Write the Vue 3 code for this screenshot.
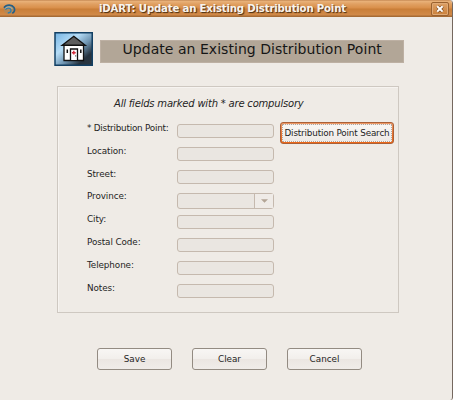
<script setup>
const fields = [
  { label: '* Distribution Point:', tight: true },
  { label: 'Location:' },
  { label: 'Street:' },
  { label: 'Province:', combo: true },
  { label: 'City:' },
  { label: 'Postal Code:' },
  { label: 'Telephone:' },
  { label: 'Notes:' },
]
const actions = ['Save', 'Clear', 'Cancel']
</script>

<template>
  <div class="window">
    <header class="titlebar">
      <svg class="app-icon" width="13" height="11" viewBox="0 0 13 11">
        <ellipse cx="6.3" cy="5.5" rx="5.6" ry="4.6" fill="#a98a62" opacity=".7" />
        <path d="M1 3.8C3.4.2 9 .4 10.9 3.4c1.4 2.2.6 4.8-1.6 5.9" fill="none" stroke="#235f88" stroke-width="1.7" />
        <path d="M2.4 5.6c2-2.3 5.6-1.6 5.6.7 0 1.6-1.5 2.6-3.2 2.7" fill="none" stroke="#2f7fae" stroke-width="1.3" />
        <path d="M2.2 4.3c2.2-2 6-1.9 7 .6" fill="none" stroke="#a9c5cc" stroke-width=".7" />
      </svg>
      <span class="title">iDART: Update an Existing Distribution Point</span>
      <button class="close" aria-label="Close">
        <svg width="8" height="8" viewBox="0 0 8 8">
          <path d="M1.4 1.4l5.2 5.2M6.6 1.4L1.4 6.6" stroke="#7d4b20" stroke-width="3.4" />
          <path d="M1.2 1.2l5.4 5.4M6.6 1.2L1.2 6.6" stroke="#fff" stroke-width="2" />
        </svg>
      </button>
    </header>

    <section class="banner">
      <svg class="house" width="39" height="34" viewBox="0 0 39 34">
        <defs>
          <linearGradient id="sky" x1="0" y1="0" x2="1" y2="1">
            <stop offset="0" stop-color="#74b4e4" />
            <stop offset=".35" stop-color="#b5dcf6" />
            <stop offset=".58" stop-color="#6f95b2" />
            <stop offset=".8" stop-color="#26323e" />
            <stop offset="1" stop-color="#2b3641" />
          </linearGradient>
        </defs>
        <rect x="1" y=".75" width="37.25" height="32.5" fill="url(#sky)" stroke="#123f63" stroke-width="1.5" />
        <path d="M10 13h19.5v15.5H10z" fill="#fff" stroke="#111" stroke-width="1.3" />
        <path d="M8.2 13.3L19.8 4.3l11.4 9z" fill="#5d5d5d" stroke="#111" stroke-width="1.4" />
        <path d="M16.5 28V17h7v11" fill="#fff" stroke="#111" stroke-width="1.3" />
        <path d="M13.3 17.5v3.5M26.8 17.5v3.5" stroke="#111" stroke-width="1.5" />
        <path d="M19.8 18.8v3.8M17.9 20.7h3.8" stroke="#d42a3a" stroke-width="1.4" />
        <path d="M21.7 23.2v1.4" stroke="#555" stroke-width="1" />
      </svg>
      <h1><span>Update an Existing Distribution Point</span></h1>
    </section>

    <main class="panel">
      <p class="note">All fields marked with * are compulsory</p>
      <div class="form">
        <div class="rows">
          <div v-for="field in fields" :key="field.label" class="row">
            <label :class="{ tight: field.tight }">{{ field.label }}</label>
            <div v-if="field.combo" class="field combo">
              <span class="arrow"><svg width="7" height="4" viewBox="0 0 7 4"><path d="M0 .3h7L3.5 3.8z" fill="#b3a596" /></svg></span>
            </div>
            <div v-else class="field"></div>
          </div>
        </div>
        <button class="search"><span>Distribution Point Search</span></button>
      </div>
    </main>

    <footer class="actions">
      <button v-for="action in actions" :key="action"><span>{{ action }}</span></button>
    </footer>
  </div>
</template>

<style>
body {
  margin: 0;
  background: #efebe7;
}
</style>

<style scoped>
* {
  box-sizing: border-box;
}
.window {
  width: 453px;
  height: 400px;
  overflow: hidden;
  background: #efebe6;
  border-right: 1px solid #75685f;
  border-radius: 0 4px 3px 0;
  font-family: "DejaVu Sans", sans-serif;
  color: #242424;
  white-space: nowrap;
}
button {
  font-family: inherit;
  color: inherit;
  padding: 0;
  margin: 0;
}
.titlebar {
  display: flex;
  align-items: center;
  height: 17px;
  padding: 0 3px;
  background: linear-gradient(#b87a45 0, #eab37b 1px, #e0a062 4px, #d98f4a 8px, #c97e38 9px, #d18a49 15px, #a66b35 16px);
}
.app-icon {
  margin-top: 1px;
}
.title {
  flex: 1;
  padding-left: 83px;
  font-size: 10.2px;
  letter-spacing: -0.2px;
  line-height: 15px;
  font-weight: bold;
  color: #f8f4ee;
  text-shadow: 1px 1px 1px #452c12;
}
.close {
  display: flex;
  align-items: center;
  justify-content: center;
  width: 18px;
  height: 14px;
  border: 1px solid #9b622f;
  border-radius: 2px;
  background: linear-gradient(#dda066, #cb813c);
  box-shadow: inset 0 0 0 1px #e0aa76;
}
.banner {
  display: flex;
  padding: 15px 0 0 54px;
  height: 69px;
}
.house {
  flex: none;
}
h1 {
  width: 304px;
  height: 23px;
  margin: 8px 0 0 7px;
  padding-left: 21.5px;
  background: #b2a697;
  border: 1px solid #bdb0a3;
  font-size: 14px;
  letter-spacing: 0.04px;
  line-height: 16px;
  font-weight: normal;
  color: #161616;
}
.panel {
  width: 342px;
  height: 227px;
  margin-left: 57px;
  border: 1px solid #cec8c1;
  box-shadow: inset 1px 1px #f6f3f0;
}
.note {
  margin: 9px 0 0 56px;
  font-size: 10px;
  letter-spacing: -0.2px;
  line-height: 16px;
  font-style: italic;
}
.form {
  display: flex;
  align-items: flex-start;
  padding: 10px 0 0 29px;
}
.rows {
  width: 187px;
}
.row {
  display: flex;
  height: 22.8px;
}
label {
  width: 90px;
  font-size: 8.8px;
  letter-spacing: -0.08px;
  line-height: 12px;
}
.tight {
  letter-spacing: -0.22px;
}
.field {
  width: 97px;
  height: 14px;
  margin-top: 2px;
  background: #eae6e1;
  border: 1px solid #c5b9ae;
  border-radius: 3px;
}
.combo {
  display: flex;
  justify-content: flex-end;
  height: 16px;
  margin-top: 3px;
}
.arrow {
  display: flex;
  align-items: center;
  justify-content: center;
  width: 19px;
  border-left: 1px solid #c5b9ae;
  background: #efebe7;
}
.search {
  width: 114px;
  height: 22px;
  margin-left: 6px;
  border: 1px solid #aa6038;
  border-radius: 3px;
  background: linear-gradient(#ee9a68, #e9722d 60%, #ed6818);
  padding: 1px;
  font-size: 8.8px;
  letter-spacing: -0.16px;
}
.search span {
  display: flex;
  align-items: center;
  justify-content: center;
  height: 18px;
  background: linear-gradient(#f8f6f4, #eeeae6);
  border: 1px dotted #b0a69f;
  border-radius: 1px;
}
.actions {
  display: flex;
  gap: 20px;
  padding: 35px 0 0 97px;
}
.actions button {
  width: 75px;
  height: 22px;
  border: 1px solid #938b82;
  border-radius: 3px;
  background: linear-gradient(#f8f6f4 0, #f2efec 48%, #ebe6e2 52%, #f0ece9);
  font-size: 8.8px;
}
.actions button span {
  display: block;
  margin-top: -1px;
}
</style>
